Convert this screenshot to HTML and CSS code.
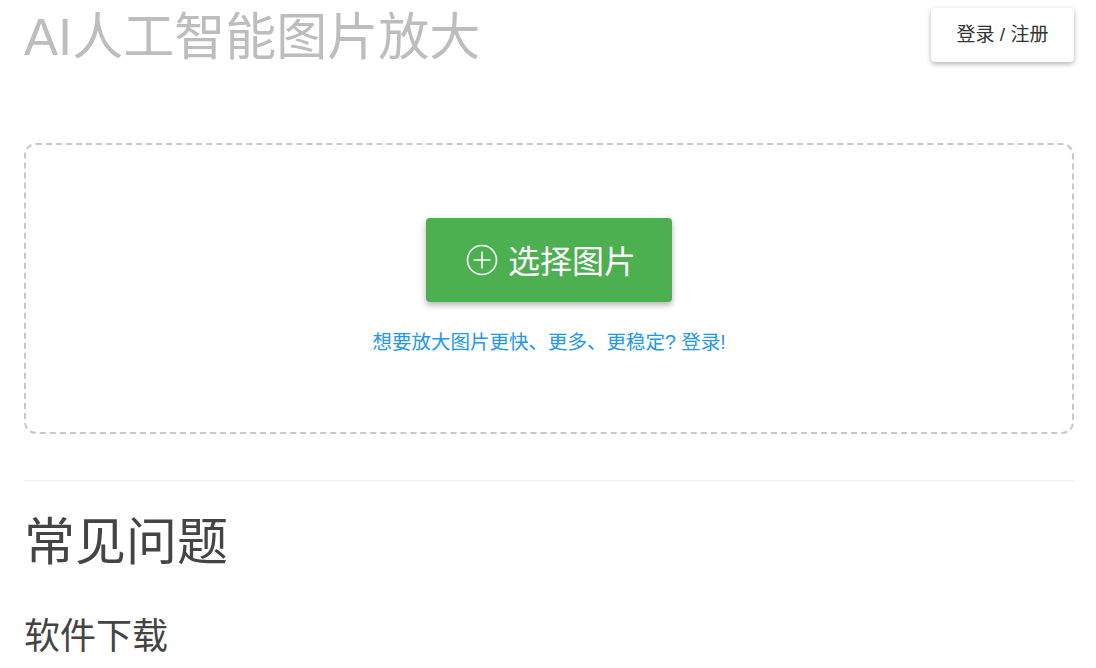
FILE: index.html
```html
<!DOCTYPE html>
<html lang="zh-CN">
<head>
    <meta charset="UTF-8">
    <meta name="viewport" content="width=device-width, initial-scale=1.0">
    <title>AI人工智能图片放大</title>
    <link rel="stylesheet" href="styles.css">
</head>
<body>
    <div class="container">
        <header class="header">
            <h1 class="title">AI人工智能图片放大</h1>
            <button class="login-btn" type="button">登录 / 注册</button>
        </header>

        <!-- Upload area -->
        <div class="dropzone">
            <button class="pick-btn" type="button">
                <svg class="plus-icon" width="32" height="32" viewBox="0 0 32 32">
                    <circle cx="16" cy="16" r="14.5" fill="none" stroke="#fff" stroke-width="1.6"/>
                    <path d="M16 7.5V24.5M7.5 16H24.5" stroke="#fff" stroke-width="1.6" fill="none"/>
                </svg>
                <span>选择图片</span>
            </button>
            <a class="hint" href="#">想要放大图片更快、更多、更稳定? 登录!</a>
        </div>

        <hr class="divider">

        <h2 class="faq-title">常见问题</h2>
        <h3 class="sub-title">软件下载</h3>
    </div>
</body>
</html>
```

FILE: styles.css
```css
/* General */
body {
    margin: 0;
    font-family: "Liberation Sans", "Noto Sans CJK SC", sans-serif;
    background: #fff;
    color: #444;
}

.container {
    width: 1050px;
    margin: 0 0 0 24px;
}

/* Header */
.header {
    display: flex;
    justify-content: space-between;
    align-items: flex-start;
}

.title {
    margin: 0;
    padding-top: 2px;
    font-size: 51px;
    font-weight: normal;
    line-height: 72px;
    color: #bdbdbd;
}

.login-btn {
    margin-top: 8px;
    width: 143px;
    height: 54px;
    padding: 0 0 5px;
    background: #fff;
    border: none;
    border-radius: 4px;
    font-family: inherit;
    font-size: 19px;
    color: #333;
    box-shadow: 0 2px 5px rgba(0, 0, 0, 0.3);
    cursor: pointer;
}

/* Upload area */
.dropzone {
    margin-top: 69px;
    height: 291px;
    border: 2px dashed #c8c8c8;
    border-radius: 12px;
    display: flex;
    flex-direction: column;
    align-items: center;
    padding-top: 73px;
    box-sizing: border-box;
}

.pick-btn {
    width: 246px;
    height: 84px;
    padding: 0 0 3px 4px;
    display: flex;
    align-items: center;
    justify-content: center;
    gap: 10px;
    background: #4caf50;
    color: #fff;
    border: none;
    border-radius: 4px;
    font-family: inherit;
    font-size: 32px;
    box-shadow: 0 3px 6px rgba(0, 0, 0, 0.3);
    cursor: pointer;
}

.plus-icon {
    display: block;
    margin-top: 3px;
}

.hint {
    margin-top: 24px;
    font-size: 19.5px;
    color: #2196f3;
    text-decoration: none;
}

/* FAQ */
.divider {
    margin: 46px 0 0;
    border: none;
    border-top: 1px solid #eee;
}

.faq-title {
    margin: 26px 0 0;
    font-size: 51px;
    font-weight: normal;
    line-height: 72px;
    color: #444;
}

.sub-title {
    margin: 33px 0 0;
    font-size: 36px;
    font-weight: normal;
    line-height: 50px;
    color: #444;
}
```
